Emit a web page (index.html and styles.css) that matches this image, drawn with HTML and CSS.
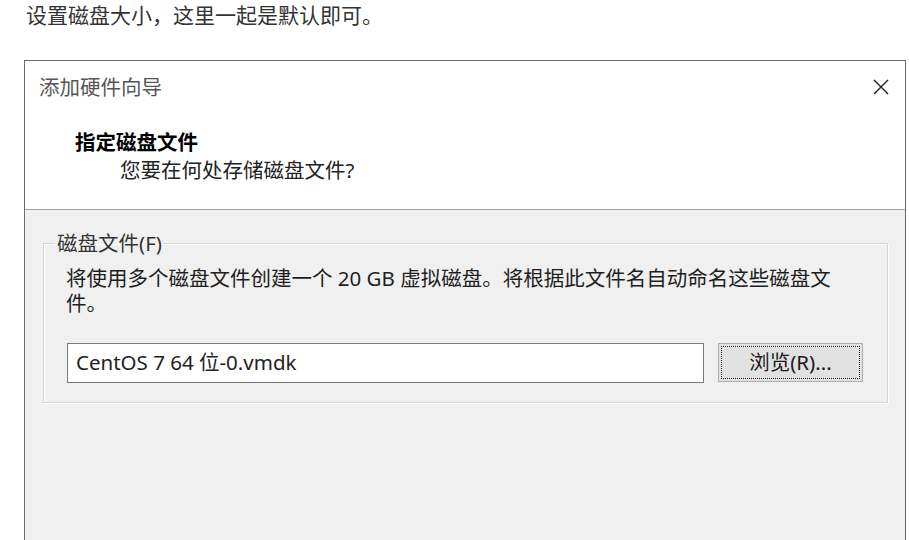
FILE: index.html
```html
<!DOCTYPE html>
<html lang="zh-CN">
<head>
    <meta charset="UTF-8">
    <meta name="viewport" content="width=device-width, initial-scale=1.0">
    <title>添加硬件向导</title>
    <link rel="stylesheet" href="styles.css">
</head>
<body>

    <p class="intro">设置磁盘大小，这里一起是默认即可。</p>

    <div class="dialog">
        <div class="head">
            <div class="titlebar">
                <span class="title">添加硬件向导</span>
                <svg class="close" width="16" height="16" viewBox="0 0 16 16">
                    <path d="M1 1 L15 15 M15 1 L1 15" stroke="#1e1e1e" stroke-width="1.4" fill="none"/>
                </svg>
            </div>
            <div class="heading">指定磁盘文件</div>
            <div class="subheading">您要在何处存储磁盘文件?</div>
        </div>

        <div class="body">
            <fieldset class="group">
                <legend>磁盘文件(F)</legend>
                <p class="info">将使用多个磁盘文件创建一个 20 GB 虚拟磁盘。将根据此文件名自动命名这些磁盘文<br>件。</p>
                <div class="filerow">
                    <div class="field">CentOS 7 64 位-0.vmdk</div>
                    <div class="browse"><span>浏览(R)...</span></div>
                </div>
            </fieldset>
        </div>
    </div>

</body>
</html>
```

FILE: styles.css
```css
body {
    margin: 0;
    background: #fff;
    font-family: "Noto Sans", "Noto Sans CJK SC", sans-serif;
    color: #1c1c1c;
}

.intro {
    margin: 0;
    padding-left: 26px;
    font-size: 21px;
    line-height: 30px;
    color: #333;
}

.dialog {
    box-sizing: border-box;
    width: 882px;
    height: 520px;
    margin: 30px 0 0 24px;
    border: 1px solid #6a6a6a;
    border-bottom: none;
    background: #f0f0f0;
    font-size: 20.5px;
}

.head {
    height: 148px;
    background: #fff;
    border-bottom: 1px solid #a0a0a0;
}

.titlebar {
    display: flex;
    justify-content: space-between;
    align-items: center;
    padding: 12px 16px 0 14px;
    line-height: 28px;
}

.title {
    color: #555;
}

.heading {
    margin-top: 27px;
    padding-left: 50px;
    line-height: 28px;
    font-weight: bold;
    color: #000;
}

.subheading {
    padding-left: 95px;
    line-height: 28px;
    color: #222;
}

.body {
    padding: 21px 17px 0 18px;
}

.group {
    margin: 0;
    padding: 0 22px 19px 22px;
    border: 1px solid #d6d6d6;
    box-shadow: inset 1px 1px 0 #fff, 1px 1px 0 #fff;
}

.group legend {
    margin-left: -11px;
    padding: 0 2px;
    line-height: 24px;
    color: #333;
}

.info {
    margin: 11px 0 0 0;
    line-height: 25px;
    color: #1e1e1e;
}

.filerow {
    display: flex;
    align-items: flex-start;
    gap: 14px;
    margin-top: 27px;
    margin-left: 1px;
}

.field {
    box-sizing: border-box;
    width: 637px;
    height: 40px;
    padding-left: 8px;
    border: 1px solid #7a7a7a;
    background: #fff;
    line-height: 36px;
    color: #222;
}

.browse {
    box-sizing: border-box;
    width: 145px;
    height: 39px;
    padding: 2px;
    border: 1px solid #adadad;
    background: #e1e1e1;
}

.browse span {
    display: block;
    height: 100%;
    box-sizing: border-box;
    border: 1px dotted #222;
    text-align: center;
    line-height: 31px;
    color: #1a1a1a;
}
```
